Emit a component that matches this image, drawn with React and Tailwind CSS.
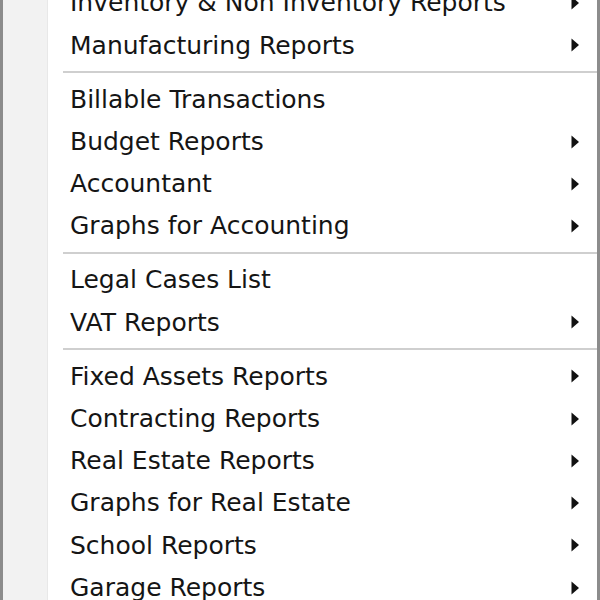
const groups = [
  [
    { label: 'Inventory & Non Inventory Reports', sub: true },
    { label: 'Manufacturing Reports', sub: true },
  ],
  [
    { label: 'Billable Transactions', sub: false },
    { label: 'Budget Reports', sub: true },
    { label: 'Accountant', sub: true },
    { label: 'Graphs for Accounting', sub: true },
  ],
  [
    { label: 'Legal Cases List', sub: false },
    { label: 'VAT Reports', sub: true },
  ],
  [
    { label: 'Fixed Assets Reports', sub: true },
    { label: 'Contracting Reports', sub: true },
    { label: 'Real Estate Reports', sub: true },
    { label: 'Graphs for Real Estate', sub: true },
    { label: 'School Reports', sub: true },
    { label: 'Garage Reports', sub: true },
  ],
];

function Arrow() {
  return (
    <svg width="10" height="14" viewBox="0 0 10 14" className="shrink-0">
      <path d="M1.5 0.5 L9 7 L1.5 13.5 Z" fill="#111" />
    </svg>
  );
}

function MenuRow({ item }) {
  return (
    <div className="h-[42.25px] flex items-center pl-[22px] pr-[17px] text-[#151515]">
      <span className="flex-1 whitespace-nowrap">{item.label}</span>
      {item.sub && <Arrow />}
    </div>
  );
}

export default function App() {
  return (
    <div
      className="w-[600px] h-[600px] overflow-hidden flex bg-white border-l-[3px] border-r-[3px] border-[#8c8c8c]"
      style={{ fontFamily: '"DejaVu Sans", Tahoma, sans-serif' }}
    >
      {/* icon gutter */}
      <div className="w-[45px] shrink-0 bg-[#f2f2f2] border-r border-[#e8e8e8]" />
      <div className="flex-1 flex flex-col text-[25px] -mt-[18px]">
        {groups.map((group, gIdx) => (
          <div key={gIdx}>
            {gIdx > 0 && (
              <div className="h-[11.75px] flex items-center pl-[15px]">
                <div className="w-full h-[2px] bg-[#cfcfcf]" />
              </div>
            )}
            {group.map((item, idx) => (
              <MenuRow key={idx} item={item} />
            ))}
          </div>
        ))}
      </div>
    </div>
  );
}
